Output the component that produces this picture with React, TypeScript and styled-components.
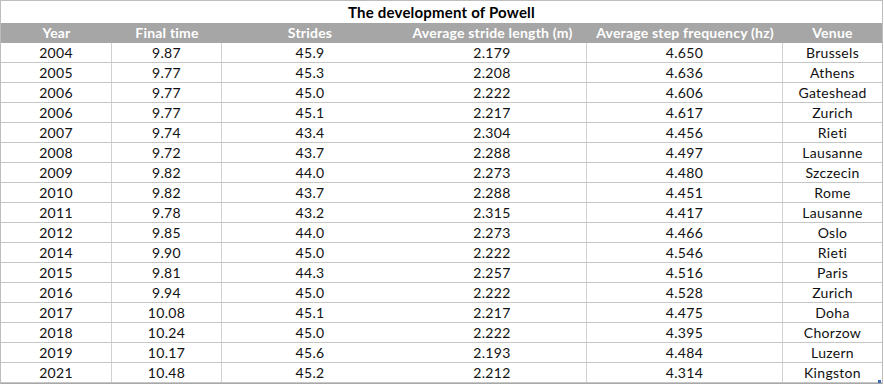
import React from 'react';
import styled, { createGlobalStyle } from 'styled-components';

const GlobalStyle = createGlobalStyle`
  html, body {
    margin: 0;
    padding: 0;
    background: #ffffff;
  }
  body {
    font-family: Lato, "Open Sans", sans-serif;
  }
`;

const columns = [
	{ key: 'year', label: 'Year', width: 111, divider: true },
	{ key: 'time', label: 'Final time', width: 110, divider: true },
	{ key: 'strides', label: 'Strides', width: 176, divider: false },
	{ key: 'length', label: 'Average stride length (m)', width: 189, divider: true },
	{ key: 'freq', label: 'Average step frequency (hz)', width: 196, divider: true },
	{ key: 'venue', label: 'Venue', width: 99, divider: false },
];

const rows = [
	['2004', '9.87', '45.9', '2.179', '4.650', 'Brussels'],
	['2005', '9.77', '45.3', '2.208', '4.636', 'Athens'],
	['2006', '9.77', '45.0', '2.222', '4.606', 'Gateshead'],
	['2006', '9.77', '45.1', '2.217', '4.617', 'Zurich'],
	['2007', '9.74', '43.4', '2.304', '4.456', 'Rieti'],
	['2008', '9.72', '43.7', '2.288', '4.497', 'Lausanne'],
	['2009', '9.82', '44.0', '2.273', '4.480', 'Szczecin'],
	['2010', '9.82', '43.7', '2.288', '4.451', 'Rome'],
	['2011', '9.78', '43.2', '2.315', '4.417', 'Lausanne'],
	['2012', '9.85', '44.0', '2.273', '4.466', 'Oslo'],
	['2014', '9.90', '45.0', '2.222', '4.546', 'Rieti'],
	['2015', '9.81', '44.3', '2.257', '4.516', 'Paris'],
	['2016', '9.94', '45.0', '2.222', '4.528', 'Zurich'],
	['2017', '10.08', '45.1', '2.217', '4.475', 'Doha'],
	['2018', '10.24', '45.0', '2.222', '4.395', 'Chorzow'],
	['2019', '10.17', '45.6', '2.193', '4.484', 'Luzern'],
	['2021', '10.48', '45.2', '2.212', '4.314', 'Kingston'],
];

const gridTemplate = columns.map((c) => `${c.width}px`).join(' ');

const Sheet = styled.div`
	position: relative;
	width: 881px;
	border: 1px solid #bdbdbd;
	border-bottom-color: #a8a8a8;
	box-sizing: content-box;
	font-size: 14px;
	color: #111;
`;

const Title = styled.div`
	height: 22px;
	line-height: 22px;
	text-align: center;
	font-weight: 700;
	font-size: 15px;
	letter-spacing: 0.2px;
	color: #000;
`;

const Row = styled.div<{ $header?: boolean }>`
	display: grid;
	grid-template-columns: ${gridTemplate};
	height: 20px;
	box-sizing: border-box;
	background: ${(p) => (p.$header ? '#a6a6a6' : '#ffffff')};
	border-bottom: ${(p) => (p.$header ? 'none' : '1px solid #c6c6c6')};
`;

const Cell = styled.div<{ $divider?: boolean; $header?: boolean }>`
	text-align: center;
	line-height: ${(p) => (p.$header ? '20px' : '19px')};
	box-sizing: border-box;
	white-space: nowrap;
	overflow: hidden;
	font-weight: ${(p) => (p.$header ? 700 : 400)};
	color: ${(p) => (p.$header ? '#ffffff' : '#111111')};
	border-right: ${(p) => (p.$divider && !p.$header ? '1px solid #d0d0d0' : 'none')};
	letter-spacing: ${(p) => (p.$header ? '0.2px' : '0.3px')};
`;

const FillHandle = styled.span`
	position: absolute;
	right: 1px;
	bottom: 0px;
	width: 3px;
	height: 3px;
	background: #3c6cb4;
`;

export default function App() {
	return (
		<>
			<GlobalStyle />
			<Sheet>
				<Title>The development of Powell</Title>
				<Row $header>
					{columns.map((c) => (
						<Cell key={c.key} $header>
							{c.label}
						</Cell>
					))}
				</Row>
				{rows.map((r, i) => (
					<Row key={i}>
						{r.map((v, j) => (
							<Cell key={j} $divider={columns[j].divider}>
								{v}
							</Cell>
						))}
					</Row>
				))}
				<FillHandle />
			</Sheet>
		</>
	);
}
